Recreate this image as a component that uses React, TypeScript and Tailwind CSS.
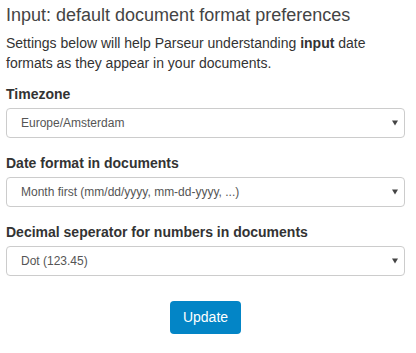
const fields = [
  { label: "Timezone", value: "Europe/Amsterdam" },
  { label: "Date format in documents", value: "Month first (mm/dd/yyyy, mm-dd-yyyy, ...)" },
  { label: "Decimal seperator for numbers in documents", value: "Dot (123.45)" },
];

const SelectBox = ({ value }: { value: string }) => (
  <div className="flex h-[30px] items-center justify-between rounded-[4px] border border-[#cccccc] bg-white pl-[14px] pr-[6px] text-[12px] text-[#555555]">
    <span>{value}</span>
    <svg width="6" height="6" viewBox="0 0 6 6" className="mt-[-1px]">
      <polygon points="0,0.5 6,0.5 3,5.5" fill="#444444" />
    </svg>
  </div>
);

export default function App() {
  return (
    <div className="min-h-screen bg-white pl-[6px] pr-[11px] text-[#333333]" style={{ fontFamily: '"Liberation Sans", Arial, sans-serif' }}>
      <h1 className="pt-[5px] text-[18px] leading-[20px] text-[#444444]">
        Input: default document format preferences
      </h1>
      <p className="mt-[8px] text-[14px] leading-[20px]">
        Settings below will help Parseur understanding <b>input</b> date formats as they appear in your documents.
      </p>

      <div className="mt-[11px] flex flex-col gap-[15px]">
        {fields.map((f) => (
          <div key={f.label}>
            <label className="mb-[4px] block text-[14px] font-bold leading-[20px]">{f.label}</label>
            <SelectBox value={f.value} />
          </div>
        ))}
      </div>

      <div className="mt-[25px] flex justify-center">
        <button className="h-[33px] rounded-[4px] bg-[#0385c6] px-[13px] text-[14px] text-white">
          Update
        </button>
      </div>
    </div>
  );
}
